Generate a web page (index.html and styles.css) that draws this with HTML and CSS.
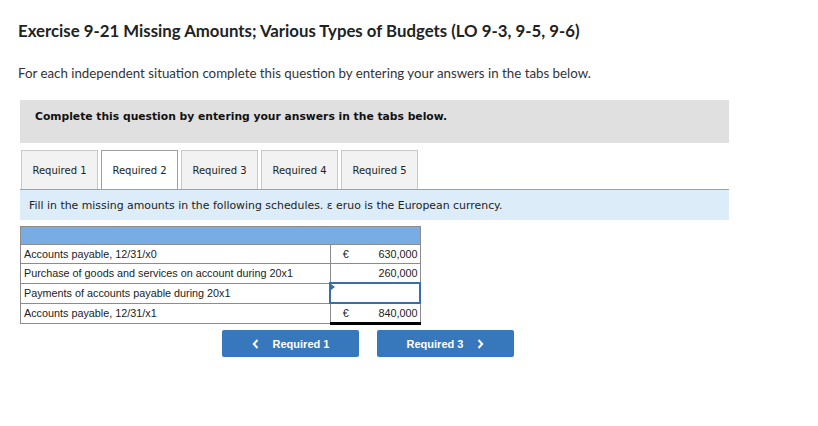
FILE: index.html
```html
<!DOCTYPE html>
<html>
<head>
<meta charset="utf-8">
<link rel="stylesheet" href="styles.css">
</head>
<body>
<div class="page">
  <h1 class="title">Exercise 9-21 Missing Amounts; Various Types of Budgets (LO 9-3, 9-5, 9-6)</h1>
  <p class="intro">For each independent situation complete this question by entering your answers in the tabs below.</p>
  <div class="notice">Complete this question by entering your answers in the tabs below.</div>
  <div class="tabs">
    <div class="tab">Required 1</div>
    <div class="tab active">Required 2</div>
    <div class="tab">Required 3</div>
    <div class="tab">Required 4</div>
    <div class="tab">Required 5</div>
  </div>
  <div class="info">Fill in the missing amounts in the following schedules. ε eruo is the European currency.</div>
  <table class="sched">
    <tr class="head"><td colspan="2"></td></tr>
    <tr>
      <td class="label">Accounts payable, 12/31/x0</td>
      <td class="val"><span class="cur">€</span><span class="num">630,000</span></td>
    </tr>
    <tr>
      <td class="label">Purchase of goods and services on account during 20x1</td>
      <td class="val"><span class="cur"></span><span class="num">260,000</span></td>
    </tr>
    <tr>
      <td class="label">Payments of accounts payable during 20x1</td>
      <td class="val input"><span class="flag"></span></td>
    </tr>
    <tr>
      <td class="label">Accounts payable, 12/31/x1</td>
      <td class="val total"><span class="cur">€</span><span class="num">840,000</span></td>
    </tr>
  </table>
  <div class="nav">
    <button class="btn"><svg class="chev" width="7" height="10" viewBox="0 0 7 10"><path d="M5.5 1 L1.8 5 L5.5 9" fill="none" stroke="#fff" stroke-width="2"/></svg><span class="btxt">Required 1</span></button>
    <button class="btn"><span class="btxt">Required 3</span><svg class="chev" width="7" height="10" viewBox="0 0 7 10"><path d="M1.5 1 L5.2 5 L1.5 9" fill="none" stroke="#fff" stroke-width="2"/></svg></button>
  </div>
</div>
</body>
</html>
```
FILE: styles.css
```css
html, body { margin: 0; padding: 0; background: #fff; }
.page { padding: 0 0 0 18px; width: 711px; }
.title {
  margin: 0; padding-top: 21px;
  font-family: "Lato", sans-serif; font-weight: 700; font-size: 16.8px;
  color: #222; line-height: 20px;
}
.intro {
  margin: 24px 0 0 0;
  font-family: "Lato", sans-serif; font-size: 13.3px; color: #333; line-height: 16px;
}
.notice {
  margin: 19px 0 0 2px; height: 43px; box-sizing: border-box;
  background: #e0e0e0; padding: 10px 0 0 15px;
  font-family: "DejaVu Sans", Verdana, sans-serif; font-weight: 700; font-size: 10.75px; color: #111;
  line-height: 14px;
}
.tabs { display: flex; gap: 3px; margin: 7px 0 0 3px; }
.tab {
  width: 77px; height: 39px; box-sizing: border-box;
  border: 1px solid #c8c8c8; border-bottom: none; background: #f2f2f2;
  font-family: "DejaVu Sans", Verdana, sans-serif; font-size: 10px; color: #222;
  display: flex; align-items: center; justify-content: center;
}
.tab.active { background: #fff; border-color: #a0a0a0; }
.info {
  margin: 0 0 0 2px; height: 31px; box-sizing: border-box;
  background: #dcedf9; border-top: 1px solid #a0a0a0;
  padding: 0 0 0 9px; display: flex; align-items: center;
  font-family: "DejaVu Sans", Verdana, sans-serif; font-size: 10.9px; color: #222;
}
.sched {
  margin: 6px 0 0 2px; border-collapse: collapse; width: 401px;
  font-family: "Liberation Sans", Arial, sans-serif; font-size: 10.8px; color: #222;
}
.sched td { border: 1px solid #8c8c8c; height: 18px; padding: 0; }
.sched .head td { background: #78ade3; height: 17px; border-color: #8c8c8c; }
.sched .label { padding-left: 3px; width: 308px; }
.sched .val { width: 74px; padding: 0 2px 0 12px; }
.val { position: relative; }
.cur { display: inline-block; width: 20px; }
.num { float: right; }
.val.input { border: 2px solid #3a6ea8; background: #fff; }
.flag {
  position: absolute; left: 0; top: 0;
  width: 0; height: 0;
  border-top: 3px solid transparent; border-bottom: 3px solid transparent;
  border-left: 4px solid #3a6ea8;
}
.val.total { border-top: 1px solid #000; border-left: 1px solid #000; border-bottom: 3px solid #000; }
.nav { display: flex; gap: 18px; margin: 5px 0 0 204px; }
.btn {
  width: 137px; height: 27px; border: none; border-radius: 2px;
  background: #3777bc; color: #fff;
  font-family: "Liberation Sans", Arial, sans-serif; font-weight: 700; font-size: 11px;
  display: flex; align-items: center; justify-content: center; gap: 14px; padding: 0;
}
.chev { display: block; }
```
